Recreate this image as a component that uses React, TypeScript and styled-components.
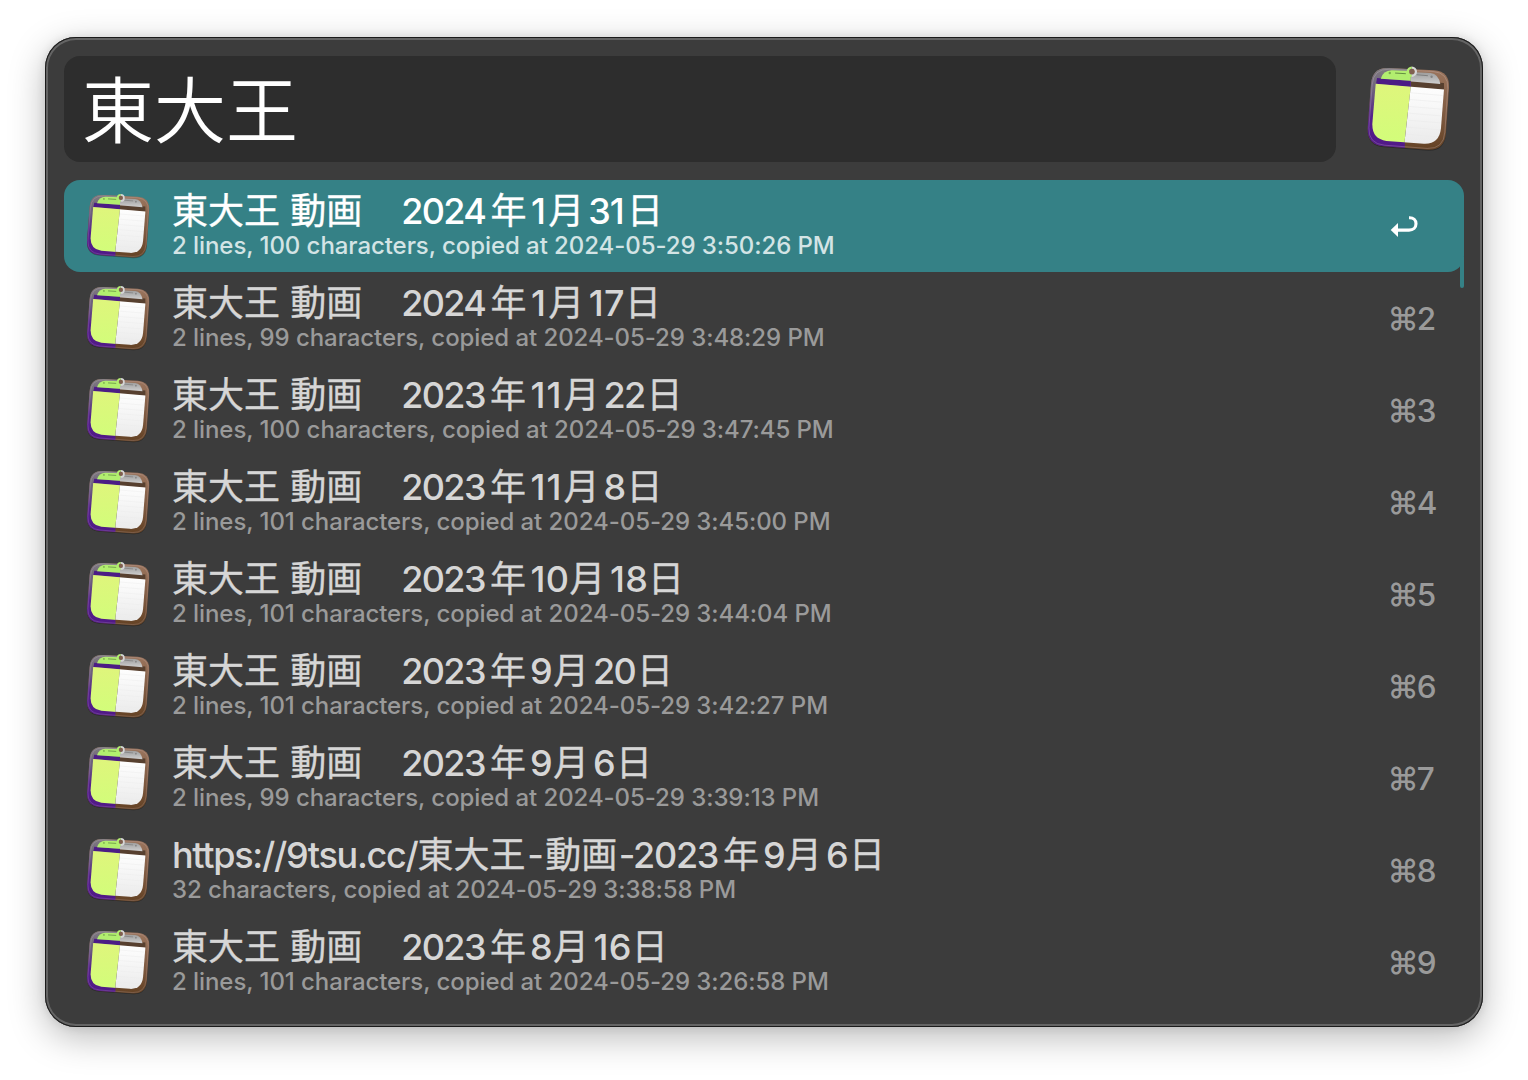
import React from "react";
import styled, { createGlobalStyle } from "styled-components";

const GlobalStyle = createGlobalStyle`
  html, body { margin: 0; background: #fff; }
  * { box-sizing: border-box; }
`;

const Stage = styled.main`
  width: 1528px;
  height: 1080px;
  padding: 37px 45px 53px;
  overflow: hidden;
  background: #fff;
  font-family: Inter, "Noto Sans CJK JP", sans-serif;
  -webkit-font-smoothing: antialiased;
`;

const Window = styled.section`
  position: relative;
  display: flex;
  flex-direction: column;
  gap: 18px;
  height: 990px;
  padding: 19px;
  border-radius: 31px;
  background: #3c3c3c;
  box-shadow:
    inset 0 0 0 1px #1b1b1b,
    inset 0 0 0 3px #646464,
    0 10px 36px rgba(0, 0, 0, 0.28),
    0 0 10px rgba(0, 0, 0, 0.1);
`;

const Header = styled.header`
  display: flex;
  height: 106px;
`;

const SearchField = styled.div`
  width: 1272px;
  height: 106px;
  padding-left: 18px;
  border-radius: 16px;
  background: #2d2d2d;
  color: #fff;
  font-family: "Noto Sans CJK JP", sans-serif;
  font-size: 72px;
  font-weight: 350;
  line-height: 99px;
  white-space: nowrap;
`;

const HeaderIcon = styled.div`
  margin: 8px 0 0 29px;
`;

const Results = styled.ul`
  list-style: none;
  margin: 0;
  padding: 0;
`;

const Row = styled.li<{ $active: boolean }>`
  display: flex;
  height: 92px;
  padding-left: 21px;
  border-radius: 16px;
  background: ${(p) => (p.$active ? "#358186" : "transparent")};
  color: ${(p) => (p.$active ? "#fff" : "#d6d6d6")};
`;

const RowIcon = styled.div`
  flex: none;
  width: 87px;
  padding-top: 12px;
`;

const Texts = styled.div`
  flex: 1;
  white-space: nowrap;
`;

const Title = styled.div`
  height: 52px;
  padding-top: 3px;
  font-size: 36px;
  line-height: 50px;
`;

const Han = styled.span`
  font-family: "Noto Sans CJK JP", sans-serif;
  font-weight: 400;
  -webkit-text-stroke: 0.35px currentColor;
`;

type RunKind = "space" | "url" | "dash" | "dashedYear" | "year" | "digits";

const runMargin: Record<RunKind, string> = {
  space: "0 0.6px",
  url: "0",
  dash: "0 1.8px",
  dashedYear: "0 5px 0 1.6px",
  year: "0 5px 0 2.8px",
  digits: "0 1.9px 0 4px",
};

const runTracking: Record<RunKind, string> = {
  space: "-0.5px",
  url: "-1.3px",
  dash: "-0.6px",
  dashedYear: "-1.3px",
  year: "-1.6px",
  digits: "-1.6px",
};

const Latin = styled.span<{ $kind: RunKind }>`
  margin: ${(p) => runMargin[p.$kind]};
  letter-spacing: ${(p) => runTracking[p.$kind]};
  font-weight: 450;
`;

const One = styled.span`
  margin-left: 0.7px;
  letter-spacing: 0.2px;
`;

const Detail = styled.div<{ $active: boolean }>`
  height: 28px;
  color: ${(p) => (p.$active ? "#d3e4e5" : "#9a9a9a")};
  font-size: 24px;
  font-weight: 450;
  letter-spacing: -0.07px;
  line-height: 28px;
`;

const Shortcut = styled.div`
  flex: none;
  width: 76.5px;
  color: #9a9a9a;
  font-size: 31.5px;
  font-weight: 500;
  letter-spacing: -2px;
  line-height: 94px;
`;

const ReturnGlyph = styled.svg`
  display: block;
  margin: 32px 0 0 1px;
`;

const ScrollThumb = styled.div`
  position: absolute;
  top: 220px;
  right: 19px;
  width: 4px;
  height: 31px;
  border-radius: 0 0 2px 2px;
  background: #358186;
`;

const IconCanvas = styled.svg`
  display: block;
`;

const BODY =
  "M118 56L254 63Q302 67 299 116L290 250Q286 302 236 300L104 290Q54 286 56 236L66 104Q70 54 118 56Z";
const PAPER = "M80 103L284 120L275 236Q270 284 224 282L112 274Q68 268 70 222Z";

function ClipboardIcon({ size, id }: { size: number; id: string }) {
  return (
    <IconCanvas width={size} height={size} viewBox="48 44 260 260">
      <defs>
        <linearGradient id={`${id}p`} x1="0" y1="0" x2="0" y2="1">
          <stop offset="0" stopColor="#7e7a7e" />
          <stop offset="0.28" stopColor="#6d5f7c" />
          <stop offset="0.6" stopColor="#54208c" />
          <stop offset="1" stopColor="#501886" />
        </linearGradient>
        <linearGradient id={`${id}b`} x1="0" y1="0" x2="0" y2="1">
          <stop offset="0" stopColor="#9c765e" />
          <stop offset="0.6" stopColor="#7c583f" />
          <stop offset="1" stopColor="#644224" />
        </linearGradient>
        <linearGradient id={`${id}y`} x1="0" y1="0" x2="0" y2="1">
          <stop offset="0" stopColor="#dff57c" />
          <stop offset="1" stopColor="#d2fd7a" />
        </linearGradient>
        <linearGradient id={`${id}w`} x1="0" y1="0" x2="0" y2="1">
          <stop offset="0" stopColor="#ffffff" />
          <stop offset="1" stopColor="#ebebeb" />
        </linearGradient>
        <linearGradient id={`${id}c`} x1="0" y1="0" x2="0" y2="1">
          <stop offset="0" stopColor="#9a9a9a" />
          <stop offset="1" stopColor="#cfcfcf" />
        </linearGradient>
        <clipPath id={`${id}l`}>
          <path d="M40 40H185V110L167 270V310H40Z" />
        </clipPath>
      </defs>
      <path d={BODY} fill="#000" opacity="0.28" transform="translate(0 3)" />
      <path d={BODY} fill={`url(#${id}b)`} />
      <path d="M170 95L284 101V121L170 112Z" fill="#57402f" />
      <path d={PAPER} fill={`url(#${id}w)`} />
      <path
        d="M184 130L280 138M182 150L278 158M181 171L277 179M179 191L275 199M177 212L274 220M175 233L272 241M173 254L266 262"
        fill="none"
        stroke="#ebebeb"
        strokeWidth="1.8"
      />
      <path d="M170 67L244 71Q268 74 273 104L170 95Z" fill={`url(#${id}c)`} />
      <g clipPath={`url(#${id}l)`}>
        <path d={BODY} fill={`url(#${id}p)`} />
        <path d="M84 86L190 95V113L81 103Z" fill="#4c1c85" />
        <path d={PAPER} fill={`url(#${id}y)`} />
        <path d="M95 88Q102 64 128 63L190 65V94Z" fill="#b2ee6f" />
      </g>
      <path
        d={BODY}
        fill="none"
        stroke="#e3d0dc"
        strokeOpacity="0.3"
        strokeWidth="2.5"
        transform="translate(178 178) scale(0.97) translate(-178 -178)"
      />
      <path d="M138 71L170 73" stroke="#557b3a" strokeWidth="2.5" />
      <path d="M202 76L236 79" stroke="#777" strokeWidth="2.5" />
      <circle cx="122" cy="71" r="3.5" fill="#7bad4d" />
      <circle cx="247" cy="82" r="3.5" fill="#858585" />
      <path d="M188 55A12 12 0 0 0 188 79" fill="none" stroke="#b2ee6f" strokeWidth="7" />
      <path d="M188 55A12 12 0 0 1 188 79" fill="none" stroke="#d6d6d6" strokeWidth="7" />
      <circle cx="188" cy="67" r="8" fill="#80604f" />
    </IconCanvas>
  );
}

function ReturnIcon() {
  return (
    <ReturnGlyph width="30" height="28" viewBox="0 0 30 28">
      <path
        d="M20 5.7H20.6C24.4 5.7 27 8.1 27 11.7C27 15.7 24.2 18.1 20 18.1H8"
        fill="none"
        stroke="#fff"
        strokeWidth="3.1"
      />
      <path d="M1.7 18.1L9 11V25.1Z" fill="#fff" />
    </ReturnGlyph>
  );
}

const rows = [
  ["東大王 動画　2024年1月31日", "2 lines, 100 characters, copied at 2024-05-29 3:50:26 PM"],
  ["東大王 動画　2024年1月17日", "2 lines, 99 characters, copied at 2024-05-29 3:48:29 PM"],
  ["東大王 動画　2023年11月22日", "2 lines, 100 characters, copied at 2024-05-29 3:47:45 PM"],
  ["東大王 動画　2023年11月8日", "2 lines, 101 characters, copied at 2024-05-29 3:45:00 PM"],
  ["東大王 動画　2023年10月18日", "2 lines, 101 characters, copied at 2024-05-29 3:44:04 PM"],
  ["東大王 動画　2023年9月20日", "2 lines, 101 characters, copied at 2024-05-29 3:42:27 PM"],
  ["東大王 動画　2023年9月6日", "2 lines, 99 characters, copied at 2024-05-29 3:39:13 PM"],
  ["https://9tsu.cc/東大王-動画-2023年9月6日", "32 characters, copied at 2024-05-29 3:38:58 PM"],
  ["東大王 動画　2023年8月16日", "2 lines, 101 characters, copied at 2024-05-29 3:26:58 PM"],
];

function kindOf(run: string): RunKind {
  if (run === " ") return "space";
  if (run === "-") return "dash";
  if (run.startsWith("-")) return "dashedYear";
  if (run.startsWith("http")) return "url";
  return run.length === 4 ? "year" : "digits";
}

function TitleText({ text }: { text: string }) {
  const runs = text.match(/[\x20-\x7e]+|[^\x20-\x7e]+/g) ?? [];
  return (
    <Title>
      {runs.map((run, i) =>
        /^[\x20-\x7e]/.test(run) ? (
          <Latin key={i} $kind={kindOf(run)}>
            {run.split(/(1)/).map((part, j) => (part === "1" ? <One key={j}>1</One> : part))}
          </Latin>
        ) : (
          <Han key={i}>{run}</Han>
        )
      )}
    </Title>
  );
}

export default function App() {
  return (
    <Stage>
      <GlobalStyle />
      <Window>
        <Header>
          <SearchField>東大王</SearchField>
          <HeaderIcon>
            <ClipboardIcon size={87} id="head" />
          </HeaderIcon>
        </Header>
        <Results>
          {rows.map(([title, detail], i) => (
            <Row key={i} $active={i === 0}>
              <RowIcon>
                <ClipboardIcon size={66.5} id={`row${i}`} />
              </RowIcon>
              <Texts>
                <TitleText text={title} />
                <Detail $active={i === 0}>{detail}</Detail>
              </Texts>
              <Shortcut>{i === 0 ? <ReturnIcon /> : `⌘${i + 1}`}</Shortcut>
            </Row>
          ))}
        </Results>
        <ScrollThumb />
      </Window>
    </Stage>
  );
}
